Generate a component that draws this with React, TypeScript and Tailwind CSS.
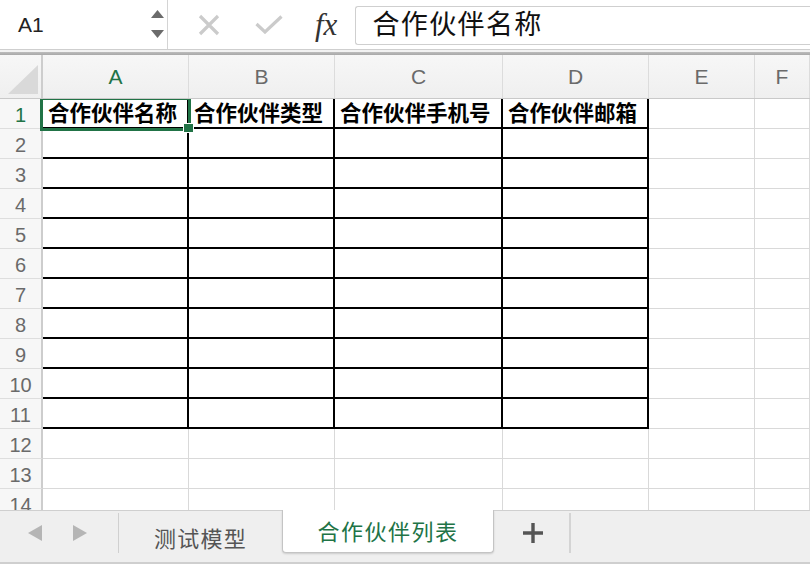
const COLS = ['A', 'B', 'C', 'D', 'E', 'F']
const HEADERS = ['合作伙伴名称', '合作伙伴类型', '合作伙伴手机号', '合作伙伴邮箱']
const ROWS = Array.from({ length: 14 }, (_, i) => i + 1)

function FormulaBar() {
  return (
    <div className="flex h-[49px] items-stretch bg-white">
      <div className="flex w-[168px] items-center justify-between border-r border-[#d4d4d4] pl-[18px] pr-[3px]">
        <span className="text-[21px] text-[#222]">A1</span>
        <div className="flex flex-col gap-[12px] pb-[1px]">
          <svg width="13" height="8" viewBox="0 0 13 8">
            <polygon points="6.5,0 13,8 0,8" fill="#6b6b6b" />
          </svg>
          <svg width="13" height="8" viewBox="0 0 13 8">
            <polygon points="0,0 13,0 6.5,8" fill="#6b6b6b" />
          </svg>
        </div>
      </div>
      <div className="flex flex-1 items-center">
        <svg className="ml-[30px]" width="22" height="22" viewBox="0 0 22 22">
          <path d="M2 2 L20 20 M20 2 L2 20" stroke="#cbcbcb" strokeWidth="3.2" strokeLinecap="butt" />
        </svg>
        <svg className="ml-[35px]" width="28" height="19" viewBox="0 0 28 19">
          <path d="M1.5 9 L10 17 L26.5 1.5" stroke="#cbcbcb" strokeWidth="3.2" fill="none" />
        </svg>
        <span className="ml-[32px] font-['Liberation_Serif',serif] text-[31px] italic leading-none text-[#333]">
          fx
        </span>
        <div className="ml-[18px] mt-[1px] flex h-[39px] flex-1 items-center rounded-l-[3px] border border-r-0 border-[#cfcfcf] pl-[16px]">
          <span className="text-[27px] leading-none tracking-[1.4px] text-[#111]">合作伙伴名称</span>
        </div>
      </div>
    </div>
  )
}

function ColumnHeader() {
  return (
    <div className="grid h-[44px] grid-cols-[43px_146px_146px_168px_146px_106px_1fr] border-b border-[#c9c9c9] bg-gradient-to-b from-[#f7f7f7] to-[#efefef]">
      <div className="relative border-r-2 border-[#cdcdcd]">
        <svg className="absolute left-[8px] top-[10px]" width="30" height="29" viewBox="0 0 30 29">
          <polygon points="30,0 30,29 0,29" fill="#d9d9d9" />
        </svg>
      </div>
      {COLS.map((c, i) => (
        <div
          key={c}
          className={
            'flex items-center justify-center border-r border-[#dcdcdc] text-[21px] ' +
            (i === 0 ? 'text-[#217346]' : 'text-[#6a6a6a]')
          }
        >
          {c}
        </div>
      ))}
    </div>
  )
}

function Sheet() {
  return (
    <div className="relative flex-1 overflow-hidden bg-white">
      <div className="grid auto-rows-[30px] grid-cols-[43px_146px_146px_168px_146px_106px_1fr]">
        {ROWS.map((r) => (
          <div key={r} className="contents">
            <div
              className={
                'flex items-center justify-center border-r-2 border-b border-r-[#cdcdcd] border-b-[#dedede] bg-[#f7f7f7] pt-[2px] text-[20px] ' +
                (r === 1 ? 'text-[#217346]' : 'text-[#6a6a6a]')
              }
            >
              {r}
            </div>
            {COLS.map((c, i) => {
              const inTable = r <= 11 && i < 4
              return (
                <div
                  key={c}
                  className={
                    'flex items-center overflow-hidden whitespace-nowrap pl-[5px] pt-[3px] ' +
                    (inTable ? 'border-r-2 border-b-2 border-black' : 'border-r border-b border-[#d9d9d9]')
                  }
                >
                  {r === 1 && i < 4 ? (
                    <span className="text-[21.5px] font-bold leading-none text-black">{HEADERS[i]}</span>
                  ) : null}
                </div>
              )
            })}
          </div>
        ))}
      </div>
      <div className="pointer-events-none absolute left-[40px] top-[-2px] h-[34px] w-[151px] border-[3px] border-[#217346]" />
      <div className="pointer-events-none absolute left-[183px] top-[24px] h-[10px] w-[11px] border border-white bg-[#217346]" />
    </div>
  )
}

function TabBar() {
  return (
    <div className="flex h-[54px] items-start border-b-2 border-[#cfcfcf] bg-[#efefef]">
      <div className="flex h-full w-[119px] items-start border-t border-[#cfcfcf]">
        <div className="mt-[2px] flex h-[40px] w-full items-center border-r border-[#d0d0d0] pl-[28px]">
          <svg width="14" height="16" viewBox="0 0 14 16">
            <polygon points="14,0 14,16 0,8" fill="#b5b5b5" />
          </svg>
          <svg className="ml-[31px]" width="14" height="16" viewBox="0 0 14 16">
            <polygon points="0,0 14,8 0,16" fill="#b5b5b5" />
          </svg>
        </div>
      </div>
      <div className="flex h-full w-[163px] items-start justify-center border-t border-[#cfcfcf]">
        <span className="mt-[12px] text-[22px] tracking-[1.3px] text-[#555]">测试模型</span>
      </div>
      <div className="flex h-[43px] w-[212px] items-center justify-center rounded-b-[4px] border-x border-b border-[#c4c4c4] bg-white shadow-[0_1px_2px_rgba(0,0,0,0.15)]">
        <span className="mt-[3px] text-[22px] tracking-[1.5px] text-[#217346]">合作伙伴列表</span>
      </div>
      <div className="flex h-full w-[77px] items-start border-t border-[#cfcfcf]">
        <div className="mt-[2px] flex h-[40px] w-full items-center justify-center border-r-2 border-[#d4d4d4] pl-[2px]">
          <svg width="22" height="22" viewBox="0 0 22 22">
            <path d="M11 1 V21 M1 11 H21" stroke="#555" strokeWidth="3.4" />
          </svg>
        </div>
      </div>
      <div className="h-full flex-1 border-t border-[#cfcfcf]" />
    </div>
  )
}

export default function App() {
  return (
    <div className="flex h-[564px] w-[810px] flex-col overflow-hidden bg-white font-['Liberation_Sans','Noto_Sans_CJK_SC',sans-serif]">
      <FormulaBar />
      <div className="h-[1px] bg-[#cfcfcf]" />
      <div className="h-[2px] bg-[#f2f2f2]" />
      <div className="h-[3px] bg-gradient-to-b from-[#bdbdbd] to-[#a8a8a8]" />
      <ColumnHeader />
      <Sheet />
      <TabBar />
    </div>
  )
}
